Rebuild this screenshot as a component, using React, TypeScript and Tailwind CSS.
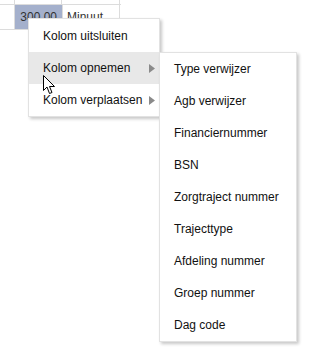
import { ReactNode } from 'react';

const submenuItems = [
  'Type verwijzer',
  'Agb verwijzer',
  'Financiernummer',
  'BSN',
  'Zorgtraject nummer',
  'Trajecttype',
  'Afdeling nummer',
  'Groep nummer',
  'Dag code',
];

function Caret() {
  return (
    <svg width="6" height="9" viewBox="0 0 6 9" className="shrink-0">
      <path d="M0 0 L6 4.5 L0 9 Z" fill="#8a8a8a" />
    </svg>
  );
}

function MenuItem({ label, active, sub }: { label: string; active?: boolean; sub?: boolean }) {
  return (
    <div
      className={`flex h-8 items-center justify-between pl-[14px] pr-[4px] ${active ? 'bg-[#e8e8e8]' : ''}`}
    >
      <span>{label}</span>
      {sub ? <Caret /> : null}
    </div>
  );
}

function Panel({ className, children }: { className: string; children: ReactNode }) {
  return (
    <div
      className={`absolute border border-[#e2e2e2] bg-white shadow-[2px_2px_3px_rgba(0,0,0,0.22)] ${className}`}
    >
      {children}
    </div>
  );
}

function Cursor() {
  return (
    <svg width="13" height="20" viewBox="0 0 13 20" className="absolute left-[43px] top-[75px]">
      <path
        d="M0.5 0.5 L0.5 15.5 L4 12 L6.5 18.5 L9 17.5 L6.5 11.5 L11.5 11.5 Z"
        fill="#ffffff"
        stroke="#000000"
        strokeWidth="1"
        strokeLinejoin="round"
      />
    </svg>
  );
}

export default function App() {
  return (
    <div className="relative h-[355px] w-[319px] overflow-hidden bg-white font-['Liberation_Sans',Arial,sans-serif] text-[12px] text-[#111]">
      {/* grid fragment behind the menus */}
      <div className="flex h-[5px] w-[121px] border-b border-[#dcdcdc]">
        <div className="w-[15px] border-r border-[#dcdcdc]" />
        <div className="w-[47px] border-r border-[#dcdcdc]" />
        <div className="w-[58px] border-r border-[#dcdcdc]" />
      </div>
      <div className="flex h-[25px] w-[121px] border-b border-[#dcdcdc]">
        <div className="w-[15px] border-r border-[#dcdcdc]" />
        <div className="flex w-[47px] items-center justify-end bg-[#a4b0cc] pr-[5px] text-[#333]">300,00</div>
        <div className="flex w-[58px] items-center border-l border-r border-[#dcdcdc] pl-[4px] text-[#333]">
          Minuut
        </div>
      </div>

      <Panel className="left-[28px] top-[18px] w-[132px] pt-px">
        <MenuItem label="Kolom uitsluiten" />
        <MenuItem label="Kolom opnemen" active sub />
        <MenuItem label="Kolom verplaatsen" sub />
      </Panel>

      <Panel className="left-[159px] top-[52px] w-[138px]">
        {submenuItems.map((item) => (
          <MenuItem key={item} label={item} />
        ))}
      </Panel>

      <Cursor />
    </div>
  );
}
